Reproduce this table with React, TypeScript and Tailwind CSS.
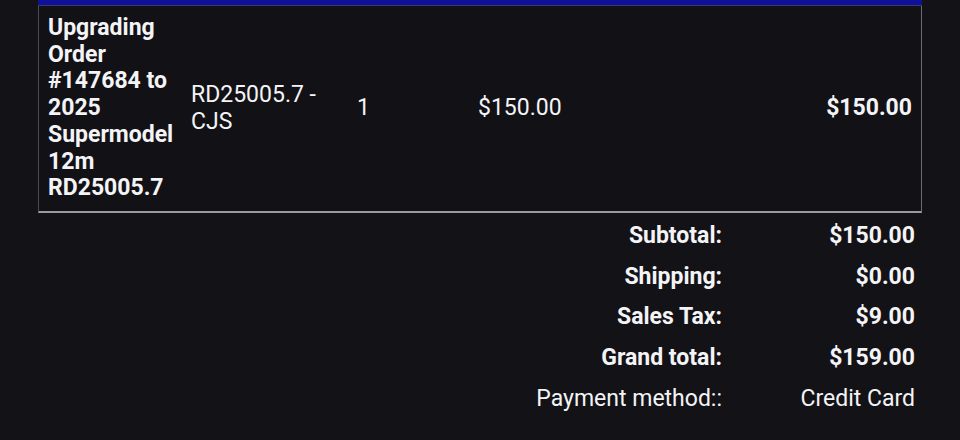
import React from "react";

const font = { fontFamily: "Roboto, 'Liberation Sans', sans-serif" };

export default function App() {
  return (
    <div className="w-[960px] h-[440px] bg-[#131217] text-[#f4f4f6] overflow-hidden" style={font}>
      <div className="ml-[38px] w-[884px]">
        <div className="h-[5px] bg-[#10109a]" />
        <div className="h-[1px] bg-[#3a3a5a]" />
        <div className="flex items-center h-[207px] bg-[#121116] border-l border-r border-l-[#4a4a52] border-r-[#6a6a72] border-b-2 border-b-[#9a9aa0] text-[23px] leading-[26.7px]">
          <div className="w-[143px] pl-[9px] pr-[2px] font-bold">
            Upgrading Order #147684 to 2025 Supermodel 12m RD25005.7
          </div>
          <div className="w-[166px] pl-[9px] pr-[10px]">RD25005.7 - CJS</div>
          <div className="w-[121px] pl-[9px]">1</div>
          <div className="flex-1 pl-[9px]">$150.00</div>
          <div className="pr-[9px] font-bold">$150.00</div>
        </div>
        <div className="flex flex-col pt-[3px] text-[23px]">
          {[
            ["Subtotal:", "$150.00", true],
            ["Shipping:", "$0.00", true],
            ["Sales Tax:", "$9.00", true],
            ["Grand total:", "$159.00", true],
            ["Payment method::", "Credit Card", false],
          ].map(([label, value, bold]) => (
            <div key={label as string} className={`flex h-[40.7px] items-center ${bold ? "font-bold" : "font-normal"}`}>
              <div className="w-[684px] text-right">{label}</div>
              <div className="w-[193px] text-right">{value}</div>
            </div>
          ))}
        </div>
      </div>
    </div>
  );
}
